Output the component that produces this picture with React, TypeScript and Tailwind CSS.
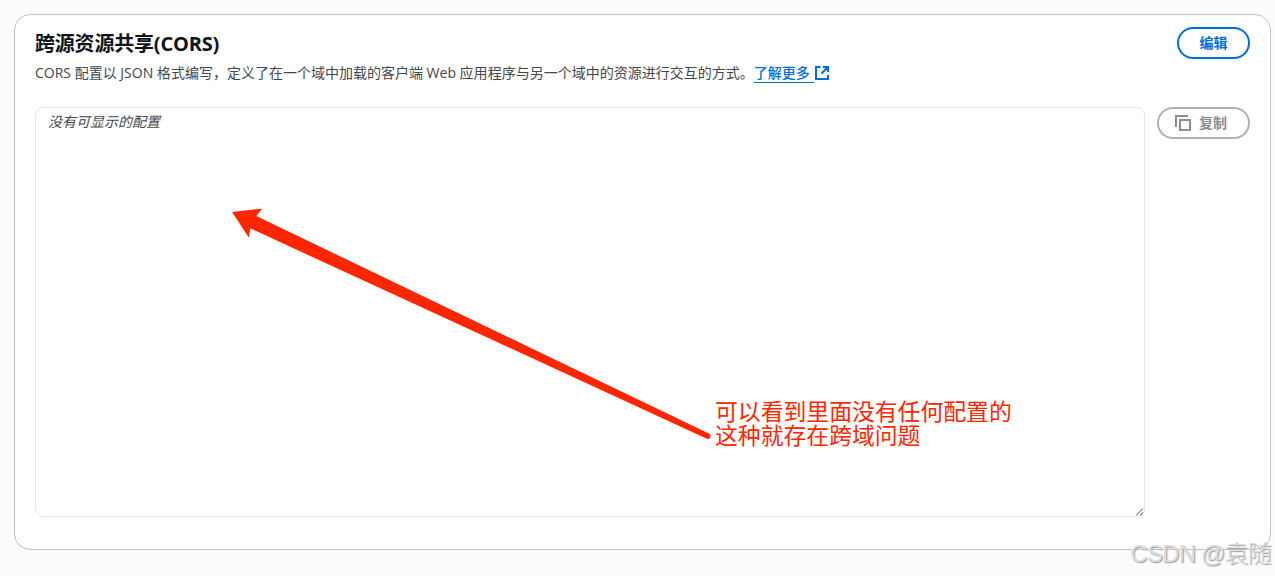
function ExternalIcon() {
  return (
    <svg viewBox="0 0 16 16" className="h-4 w-4" fill="none" stroke="currentColor" strokeWidth="2">
      <path d="M14 10v4H2V2h4.5M9 2h5v5M14 2 7.5 8.5" />
    </svg>
  );
}

function CopyIcon() {
  return (
    <svg viewBox="0 0 16 16" className="h-4 w-4" fill="none" stroke="currentColor" strokeWidth="2">
      <path d="M1 12V1h12M5 5h10v10H5z" />
    </svg>
  );
}

function ResizeGrip() {
  return (
    <svg viewBox="0 0 8 8" className="absolute right-0 bottom-0 h-2 w-2" fill="none" stroke="#4b4b4b" strokeWidth="1">
      <path d="M0.2 7.2 6.8 0.8M4.2 7.2 7 4.5" />
    </svg>
  );
}

function Annotation() {
  return (
    <>
      <svg className="pointer-events-none absolute top-0 left-0 h-[576px] w-[1275px]" viewBox="0 0 1275 576">
        <path
          fill="#ff2600"
          d="M232 212 262 208.7 256.3 216 708.8 433.6A2.7 2.7 0 0 1 706.8 438.7L250.4 228.4 248.8 237.5Z"
        />
      </svg>
      <p className="absolute top-[400px] left-[715px] text-[22.83px] leading-6 whitespace-nowrap text-[#ff2600]">
        可以看到里面没有任何配置的
        <br />
        这种就存在跨域问题
      </p>
    </>
  );
}

export default function App() {
  return (
    <div className="relative h-[576px] w-[1275px] overflow-hidden bg-[#fcfcfd] pt-[14px] pl-[14px] font-['Open_Sans','Noto_Sans_CJK_SC',sans-serif]">
      <section className="h-[536px] w-[1257px] rounded-[16px] border border-[#c0c0c7] bg-white px-5 pt-3">
        <header className="flex h-20 items-start justify-between">
          <div>
            <h2 className="mt-[5px] text-[20px] leading-6 font-bold tracking-[-0.2px] text-[#0f141a]">跨源资源共享(CORS)</h2>
            <p className="mt-[5px] flex h-6 items-center text-[14px] leading-5 text-[#424650]">
              <span className="tracking-[0.005px]">CORS 配置以 JSON 格式编写，定义了在一个域中加载的客户端 Web 应用程序与另一个域中的资源进行交互的方式。</span>
              <a href="#" className="flex items-center text-[#006ce0]">
                <span className="w-[60px] border-b border-[#006ce0] leading-[19px] font-medium">了解更多</span>
                <ExternalIcon />
              </a>
            </p>
          </div>
          <button className="h-8 w-[73px] rounded-full border-2 border-[#006ce0] text-[14px] leading-5 font-bold text-[#006ce0]">
            编辑
          </button>
        </header>
        <div className="flex items-start gap-3">
          <div className="relative h-[410px] w-[1110px] rounded-lg border border-[#e6e6ea] px-3 pt-1 text-[14px] leading-5 text-[#424650] italic">
            没有可显示的配置
            <ResizeGrip />
          </div>
          <button className="flex h-8 w-[93px] items-center gap-2 rounded-full border-2 border-[#b0b0b9] pl-4 text-[14px] leading-5 font-bold text-[#8c8c94]">
            <CopyIcon />
            复制
          </button>
        </div>
      </section>
      <Annotation />
      <div className="absolute right-[4px] bottom-[6px] font-['Liberation_Sans','Noto_Sans_CJK_SC',sans-serif] text-[24px] leading-8 font-light tracking-[-0.8px] whitespace-nowrap text-[#dedede] [text-shadow:1px_1px_1px_#999]">
        CSDN @袁随
      </div>
    </div>
  );
}
